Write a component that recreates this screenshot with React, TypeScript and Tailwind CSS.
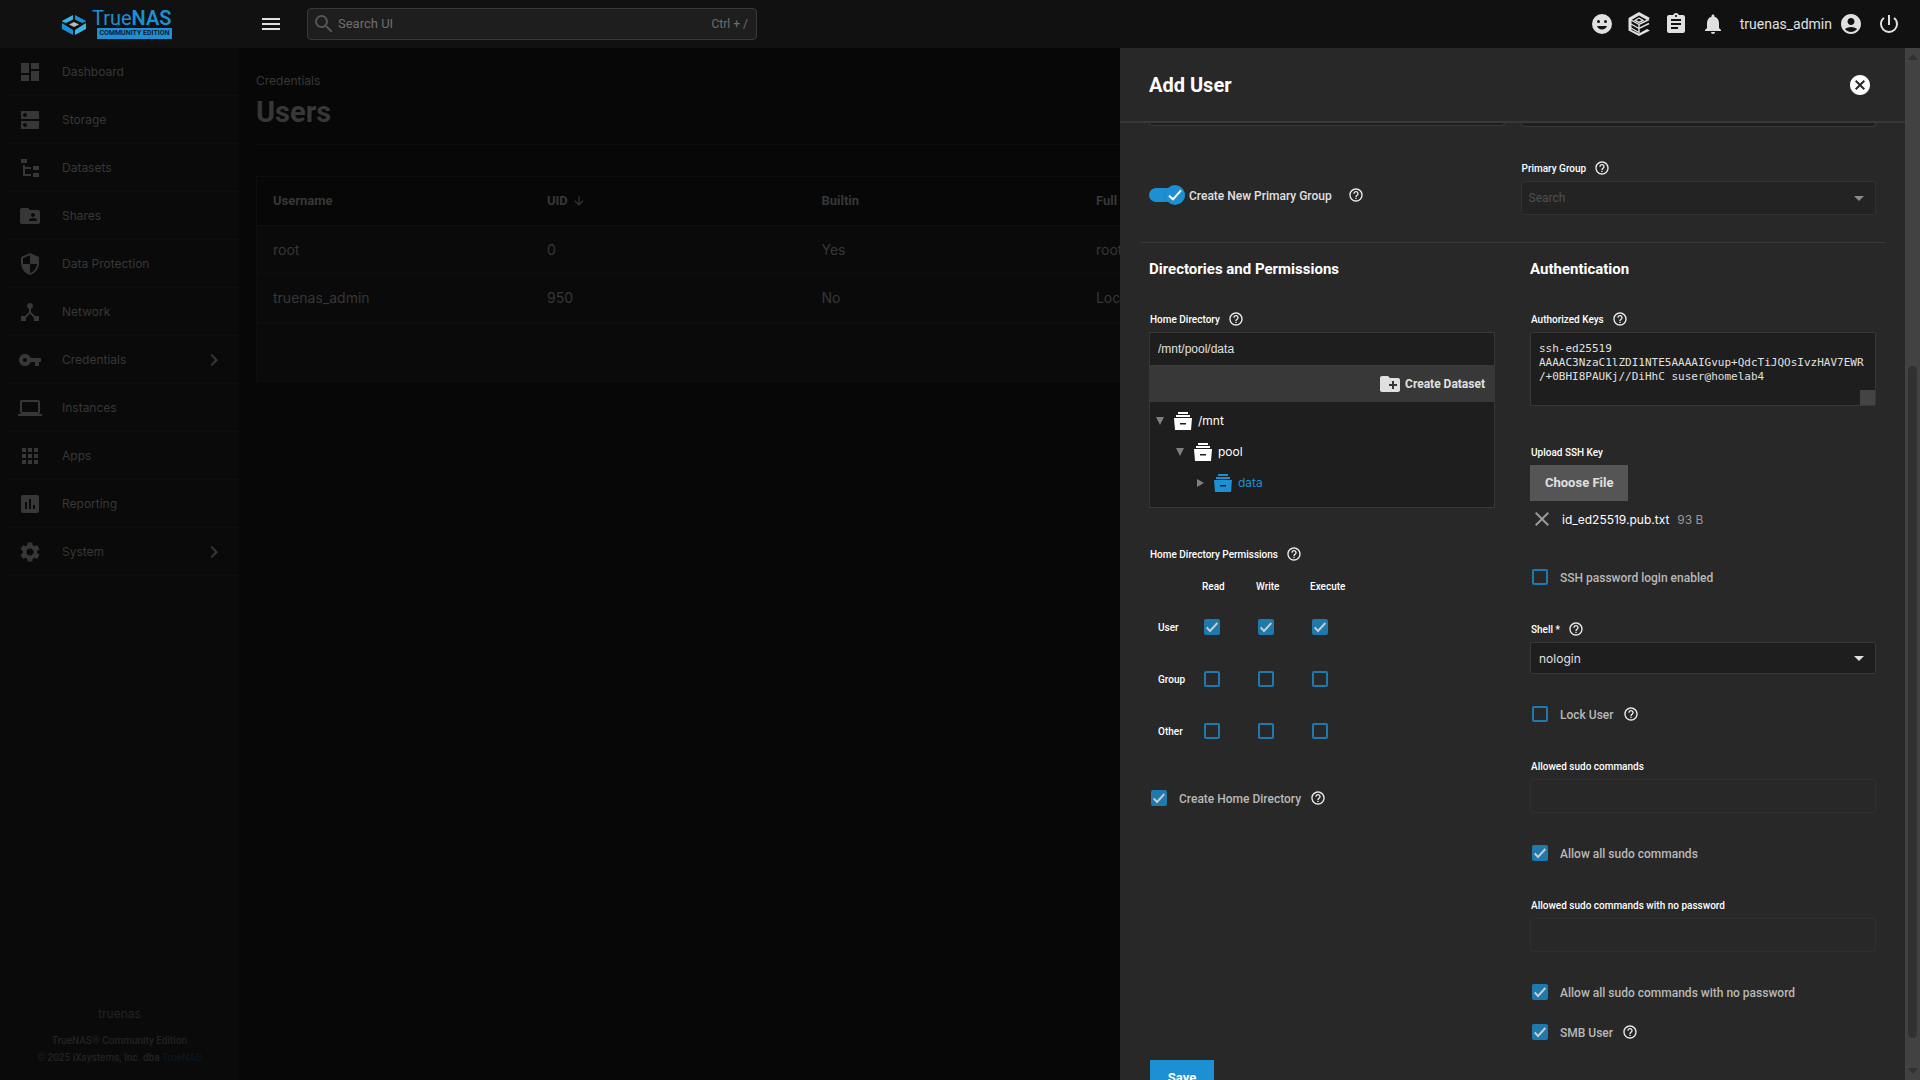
import type { ReactNode } from 'react';
import {
  MdAccountCircle,
  MdApps,
  MdArrowDownward,
  MdAssessment,
  MdAssignment,
  MdCancel,
  MdChevronRight,
  MdClose,
  MdCreateNewFolder,
  MdDashboard,
  MdDeviceHub,
  MdDns,
  MdFolderShared,
  MdHelpOutline,
  MdLaptop,
  MdMenu,
  MdNotifications,
  MdPowerSettingsNew,
  MdSearch,
  MdSecurity,
  MdSettings,
  MdVpnKey,
} from 'react-icons/md';

function DatasetsIcon() {
  return (
    <svg viewBox="0 0 24 24" className="size-6" fill="currentColor" aria-hidden="true">
      <path d="M3 3h6v4H3V3zm12 7h6v4h-6v-4zm0 7h6v4h-6v-4zm-2-4H7v5h6v2H5V9h2v2h6v2z" />
    </svg>
  );
}

function SmileIcon() {
  return (
    <svg viewBox="0 0 24 24" className="size-6" fill="currentColor" aria-hidden="true">
      <path
        fillRule="evenodd"
        d="M12 2a10 10 0 1 0 0 20 10 10 0 0 0 0-20zM8.500 8a1.500 1.500 0 1 1 0 3 1.500 1.500 0 0 1 0-3zm7 0a1.500 1.500 0 1 1 0 3 1.500 1.500 0 0 1 0-3zM7 14h10c-.8 2-2.600 3.500-5 3.500s-4.200-1.500-5-3.500z"
      />
    </svg>
  );
}

function TrueCommandIcon() {
  return (
    <svg viewBox="0 0 24 26" className="h-[26px] w-6" aria-hidden="true">
      <path fill="currentColor" d="M12 1 23 7l-3 2-8-4.500L4.500 9v10l7.500 3.500L20 18l3 1.500L12 25 1.500 19.500V7z" />
      <g fill="none" stroke="currentColor" strokeWidth="1.400">
        <path d="m4 9 8 4.500L22 8.500M4 13l8 4.500 10-5M4 17l8 4.500M12 13v9" />
        <path d="m8 9.500 4-2.500 4 2.500-4 2z" />
      </g>
    </svg>
  );
}

function BucketIcon() {
  return (
    <svg viewBox="0 0 18 18" className="size-[18px]" fill="currentColor" aria-hidden="true">
      <path fillRule="evenodd" d="M4 0h10v2H4zM2 3h14v2H2zM0 6h18l-1 12H1zM6 11v1.500h6V11z" />
    </svg>
  );
}

function Logo() {
  return (
    <a href="#" className="flex items-center gap-1.5" aria-label="TrueNAS Community Edition">
      <svg viewBox="0 0 24 20" className="mt-0.5 h-5 w-6" aria-hidden="true">
        <path fill="#3db5e6" d="M11 0v4.500L4 8 0 6.500V6z" />
        <path fill="#1c90d3" d="M13 0v4.500L20 8l4-1.500V6z" />
        <path fill="#1c90d3" d="M0 8v6l11 6v-5z" />
        <path fill="#3db5e6" d="M24 8v6l-11 6v-5z" />
        <path fill="#b9b9b9" d="m12 7 5 2.500-5 2.500-5-2.500z" />
      </svg>
      <span className="flex flex-col items-end pb-px font-['Roboto',sans-serif]">
        <span className="text-xl leading-5 text-[#1c90d3]">
          True<b className="font-semibold">NAS</b>
        </span>
        <span className="bg-[#1c90d3] px-0.5 text-[7px] leading-[11px] font-semibold text-[#11141a]">
          COMMUNITY EDITION
        </span>
      </span>
    </a>
  );
}

const nav: { label: string; icon: ReactNode; more?: boolean }[] = [
  { label: 'Dashboard', icon: <MdDashboard /> },
  { label: 'Storage', icon: <MdDns /> },
  { label: 'Datasets', icon: <DatasetsIcon /> },
  { label: 'Shares', icon: <MdFolderShared /> },
  { label: 'Data Protection', icon: <MdSecurity /> },
  { label: 'Network', icon: <MdDeviceHub /> },
  { label: 'Credentials', icon: <MdVpnKey />, more: true },
  { label: 'Instances', icon: <MdLaptop /> },
  { label: 'Apps', icon: <MdApps /> },
  { label: 'Reporting', icon: <MdAssessment /> },
  { label: 'System', icon: <MdSettings />, more: true },
];

function TopBar() {
  return (
    <header className="flex h-12 shrink-0 items-center bg-[#111111] text-[#e0e0e0]">
      <div className="flex w-60 items-center pl-[62px]">
        <Logo />
      </div>
      <button type="button" aria-label="Toggle menu" className="ml-[19px] text-2xl">
        <MdMenu />
      </button>
      <label className="ml-6 flex h-8 w-[450px] items-center rounded-sm border border-[#383838] bg-[#1e1e1e] pr-2 pl-1 font-['Roboto',sans-serif] text-xs text-[#6e6e6e]">
        <MdSearch className="mr-0.5 size-6 text-[#555555]" />
        <input aria-label="Search UI" placeholder="Search UI" className="min-w-0 flex-1 bg-transparent text-[13px] outline-none placeholder:text-[#6e6e6e]" />
        <span>Ctrl + /</span>
      </label>
      <div className="ml-auto flex items-center gap-[13px] pr-[19px] text-2xl">
        <button type="button" aria-label="Feedback"><SmileIcon /></button>
        <button type="button" aria-label="TrueCommand"><TrueCommandIcon /></button>
        <button type="button" aria-label="Jobs"><MdAssignment /></button>
        <button type="button" aria-label="Alerts"><MdNotifications /></button>
        <button type="button" className="mr-px ml-0.5 flex items-center gap-[7px]">
          <span className="font-['Roboto',sans-serif] text-sm">truenas_admin</span>
          <MdAccountCircle />
        </button>
        <button type="button" aria-label="Power"><MdPowerSettingsNew /></button>
      </div>
    </header>
  );
}

function Sidebar() {
  return (
    <nav className="flex w-60 shrink-0 flex-col border-r border-[#070707] bg-[#0a0a0a] pl-1 text-xs text-[#373737]">
      {nav.map((item) => (
        <a key={item.label} href="#" className="flex h-12 items-center border-b border-[#0e0e0e] pr-[13px] pl-3.5">
          <span className="text-2xl">{item.icon}</span>
          <span className="ml-5">{item.label}</span>
          {item.more && <MdChevronRight className="ml-auto size-6" />}
        </a>
      ))}
      <div className="mt-auto pr-1 pb-3.5 text-center font-['Roboto',sans-serif] text-[10px] leading-[17px] font-medium text-[#232323]">
        <div className="mb-2.5 font-['Inter',sans-serif] text-xs font-normal">truenas</div>
        <div>TrueNAS® Community Edition</div>
        <div>
          © 2025 iXsystems, Inc. dba <a href="#" className="text-[#071722]">TrueNAS</a>
        </div>
      </div>
    </nav>
  );
}

function UsersPage() {
  return (
    <main className="min-w-0 flex-1 bg-[#070707] px-4 pt-6 text-[#373737]">
      <div className="text-xs leading-[18px] font-normal">Credentials</div>
      <h1 className="border-b border-[#0e0e0e] pt-1 pb-3.5 font-['Roboto',sans-serif] text-[29px] leading-9 font-bold">Users</h1>
      <table className="mt-[31px] w-full table-fixed border border-[#0e0e0e] text-left text-sm">
        <thead className="font-['Roboto',sans-serif] text-[13px]">
          <tr className="h-[49px] border-b border-[#0e0e0e]">
            <th className="w-1/6 pl-4">Username</th>
            <th className="w-1/6 pl-4">
              <span className="flex items-center gap-1">UID <MdArrowDownward className="size-3.5" /></span>
            </th>
            <th className="w-1/6 pl-4">Builtin</th>
            <th className="pl-4">Full Name</th>
          </tr>
        </thead>
        <tbody className="bg-[#0a0a0a]">
          <tr className="h-12 border-b border-[#0e0e0e]">
            <td className="pl-4">root</td>
            <td className="pl-4">0</td>
            <td className="pl-4">Yes</td>
            <td className="pl-4">root</td>
          </tr>
          <tr className="h-[49px] border-b-2 border-[#0e0e0e]">
            <td className="pl-4">truenas_admin</td>
            <td className="pl-4">950</td>
            <td className="pl-4">No</td>
            <td className="pl-4">Local Administrator</td>
          </tr>
          <tr className="h-[59px]">
            <td colSpan={4} />
          </tr>
        </tbody>
      </table>
    </main>
  );
}

function Help() {
  return (
    <button type="button" aria-label="Help" className="text-base text-[#eeeeee]">
      <MdHelpOutline />
    </button>
  );
}

function FieldLabel({ id, text, help }: { id: string; text: string; help?: boolean }) {
  return (
    <div className="mb-[3px] flex h-5 items-center gap-2 pl-px">
      <label htmlFor={id} className="font-['Roboto',sans-serif] text-[10px] font-medium text-white">{text}</label>
      {help && <Help />}
    </div>
  );
}

function Box({ id, checked, label }: { id: string; checked?: boolean; label?: string }) {
  return (
    <span className="relative block size-4">
      <input
        id={id}
        type="checkbox"
        aria-label={label}
        defaultChecked={checked}
        className="peer block size-4 appearance-none rounded-xs border-2 border-[#1e79ad] checked:bg-[#1e79ad]"
      />
      <svg viewBox="0 0 24 24" className="pointer-events-none absolute inset-0 hidden size-4 peer-checked:block" fill="none" stroke="#cccccc" strokeWidth="2.800" aria-hidden="true">
        <path d="M4 12.500 9 18 20 6" />
      </svg>
    </span>
  );
}

function CheckRow({ id, text, checked, help }: { id: string; text: string; checked?: boolean; help?: boolean }) {
  return (
    <div className="flex h-5 items-center pl-0.5">
      <Box id={id} checked={checked} />
      <label htmlFor={id} className="mr-[9px] ml-3 pt-0.5 font-['Roboto',sans-serif] text-xs font-medium text-[#b8b8b8]">{text}</label>
      {help && <Help />}
    </div>
  );
}

function Caret({ className }: { className: string }) {
  return (
    <svg viewBox="0 0 10 5" className={className} fill="currentColor" aria-hidden="true">
      <path d="M0 0h10L5 5z" />
    </svg>
  );
}

function TreeRow({ name, className, closed }: { name: string; className: string; closed?: boolean }) {
  return (
    <li className={className}>
      <button type="button" className="flex h-[31px] items-center">
        <svg viewBox="0 0 8 8" className="size-2 text-[#808080]" fill="currentColor" aria-hidden="true">
          <path d={closed ? 'M1 0v8l7-4z' : 'M0 0h8L4 8z'} />
        </svg>
        <span className="mr-1.5 ml-2.5"><BucketIcon /></span>
        {name}
      </button>
    </li>
  );
}

function HomeDirectory() {
  return (
    <div className="border border-[#383838] bg-[#1e1e1e]">
      <input
        id="home"
        defaultValue="/mnt/pool/data"
        className="block h-8 w-full bg-transparent px-2 font-['Liberation_Sans',sans-serif] text-xs text-[#e0e0e0] outline-none"
      />
      <div className="flex h-[37px] items-center justify-end bg-[#383838] pr-[9px]">
        <button type="button" className="flex items-center gap-[3px] font-['Roboto',sans-serif] text-xs font-bold text-[#e0e0e0]">
          <MdCreateNewFolder className="size-6" />
          Create Dataset
        </button>
      </div>
      <ul className="pt-[3px] pb-[9px] text-xs text-white">
        <TreeRow name="/mnt" className="pl-1.5" />
        <TreeRow name="pool" className="pl-[26px]" />
        <TreeRow name="data" className="pl-[46px] text-[#1c90d3]" closed />
      </ul>
    </div>
  );
}

const permissionRows = [
  { name: 'User', set: true },
  { name: 'Group', set: false },
  { name: 'Other', set: false },
];
const permissionColumns = ['Read', 'Write', 'Execute'];

function Permissions() {
  return (
    <table className="text-left font-['Roboto',sans-serif] text-[10px] text-white">
      <thead>
        <tr className="h-[30px]">
          <th className="w-[53px]" />
          {permissionColumns.map((c) => (
            <th key={c} className="w-[54px] font-medium">{c}</th>
          ))}
        </tr>
      </thead>
      <tbody>
        {permissionRows.map((r) => (
          <tr key={r.name} className="h-[52px]">
            <th className="pl-[9px] font-medium">{r.name}</th>
            {permissionColumns.map((c) => (
              <td key={c} className="pl-0.5">
                <Box id={`${r.name}-${c}`} label={`${r.name} ${c}`} checked={r.set} />
              </td>
            ))}
          </tr>
        ))}
      </tbody>
    </table>
  );
}

function AddUserPanel() {
  return (
    <aside className="absolute top-12 right-0 bottom-0 flex w-[800px] max-w-full overflow-hidden bg-[#282828]">
      <form className="flex min-w-0 flex-1 flex-col">
        <div className="flex h-[75px] shrink-0 items-center justify-between border-b-2 border-[#383838] pr-[33px] pl-[29px]">
          <h2 className="font-['Roboto',sans-serif] text-xl font-bold text-white">Add User</h2>
          <button type="button" aria-label="Close" className="text-2xl text-white">
            <MdCancel />
          </button>
        </div>
        <div className="min-h-0 flex-1 overflow-hidden">
          <section className="mx-5 grid grid-cols-2 gap-4 border-b border-[#383838] px-[9px] pb-[27px]">
            <div>
              <div className="h-[3px] rounded-b-sm border border-t-0 border-[#383838] bg-[#1e1e1e]" />
              <div className="mt-[59px] flex h-5 items-center">
                <span className="relative flex h-5 w-9 items-center">
                  <input id="new-group" type="checkbox" role="switch" defaultChecked className="block h-3.5 w-9 appearance-none rounded-full bg-[#1c90d3]" />
                  <span className="pointer-events-none absolute right-0 flex size-5 items-center justify-center rounded-full bg-[#1c90d3] shadow">
                    <svg viewBox="0 0 24 24" className="size-4" fill="none" stroke="white" strokeWidth="3" aria-hidden="true">
                      <path d="M3 13 9 18.500 21 5" />
                    </svg>
                  </span>
                </span>
                <label htmlFor="new-group" className="mr-4 ml-1 pt-0.5 font-['Roboto',sans-serif] text-xs font-medium text-[#e0e0e0]">Create New Primary Group</label>
                <Help />
              </div>
            </div>
            <div>
              <div className="mb-[31px] h-1 rounded-b-sm border border-t-0 border-[#383838] bg-[#1e1e1e]" />
              <FieldLabel id="group" text="Primary Group" help />
              <div className="flex h-[34px] items-center rounded-xs border border-[#303030] bg-[#232323] pr-[11px] pl-[7px]">
                <input id="group" disabled placeholder="Search" className="min-w-0 flex-1 bg-transparent font-['Roboto',sans-serif] text-xs placeholder:text-[#505050]" />
                <Caret className="h-[5px] w-2.5 text-[#8a8a8a]" />
              </div>
            </div>
          </section>
          <section className="grid grid-cols-2 gap-[35px] px-[29px] pt-4">
            <div>
              <h3 className="mb-[30px] font-['Roboto',sans-serif] text-[15px] leading-5 font-bold text-white">Directories and Permissions</h3>
              <FieldLabel id="home" text="Home Directory" help />
              <HomeDirectory />
              <div className="mt-9 mb-[7px] flex h-5 items-center gap-2 pl-px">
                <span className="font-['Roboto',sans-serif] text-[10px] font-medium text-white">Home Directory Permissions</span>
                <Help />
              </div>
              <Permissions />
              <div className="mt-[31px]">
                <CheckRow id="create-home" text="Create Home Directory" checked help />
              </div>
            </div>
            <div>
              <h3 className="mb-[30px] font-['Roboto',sans-serif] text-[15px] leading-5 font-bold text-white">Authentication</h3>
              <FieldLabel id="keys" text="Authorized Keys" help />
              <div className="relative h-[74px]">
                <textarea
                  id="keys"
                  defaultValue={'ssh-ed25519\nAAAAC3NzaC1lZDI1NTE5AAAAIGvup+QdcTiJQOsIvzHAV7EWR\n/+0BHI8PAUKj//DiHhC suser@homelab4'}
                  className="block h-full w-full resize-none overflow-hidden rounded-xs border border-[#383838] bg-[#1e1e1e] px-2 pt-[9px] font-['DejaVu_Sans_Mono',monospace] text-[11px] leading-3.5 text-[#e0e0e0] outline-none"
                />
                <span className="absolute right-px bottom-px size-[15px] bg-[#444444]" />
              </div>
              <div className="mt-9">
                <FieldLabel id="upload" text="Upload SSH Key" />
              </div>
              <button id="upload" type="button" className="block h-9 bg-[#555555] px-[15px] font-['Roboto',sans-serif] text-[13px] font-bold text-[#e0e0e0]">Choose File</button>
              <div className="mt-2 mb-[38px] flex h-5 items-center text-xs">
                <button type="button" aria-label="Remove file" className="text-2xl text-[#999999]"><MdClose /></button>
                <span className="mr-2 ml-2 pt-0.5 text-white">id_ed25519.pub.txt</span>
                <span className="pt-0.5 text-[#999999]">93 B</span>
              </div>
              <CheckRow id="ssh-login" text="SSH password login enabled" />
              <div className="mt-8">
                <FieldLabel id="shell" text="Shell *" help />
              </div>
              <div className="relative mb-[30px]">
                <select id="shell" className="block h-8 w-full appearance-none rounded-xs border border-[#383838] bg-[#1e1e1e] px-2 pt-0.5 text-xs text-[#e0e0e0]">
                  <option>nologin</option>
                </select>
                <Caret className="pointer-events-none absolute top-3.5 right-3 h-[5px] w-2.5 text-[#e0e0e0]" />
              </div>
              <CheckRow id="lock" text="Lock User" help />
              <div className="mt-8 mb-[30px]">
                <FieldLabel id="sudo" text="Allowed sudo commands" />
                <input id="sudo" disabled className="block h-[34px] w-full rounded-xs border border-[#2f2f2f]" />
              </div>
              <CheckRow id="all-sudo" text="Allow all sudo commands" checked />
              <div className="mt-8 mb-[30px]">
                <FieldLabel id="sudo-np" text="Allowed sudo commands with no password" />
                <input id="sudo-np" disabled className="block h-[34px] w-full rounded-xs border border-[#2f2f2f]" />
              </div>
              <CheckRow id="all-sudo-np" text="Allow all sudo commands with no password" checked />
              <div className="mt-5">
                <CheckRow id="smb" text="SMB User" checked help />
              </div>
            </div>
          </section>
          <button type="button" className="mt-[18px] ml-[30px] block h-9 w-16 bg-[#1c90d3] font-['Roboto',sans-serif] text-[13px] font-bold text-white">Save</button>
        </div>
      </form>
      <div className="flex w-[15px] shrink-0 flex-col items-center bg-[#424242] py-1.5 text-[#313131]">
        <svg viewBox="0 0 10 6" className="h-1.5 w-2.5" fill="currentColor" aria-hidden="true"><path d="m5 0 5 6H0z" /></svg>
        <div className="min-h-0 flex-[306]" />
        <div className="w-[9px] flex-[672] rounded-full bg-[#313131]" />
        <div className="min-h-0 flex-[30]" />
        <svg viewBox="0 0 10 6" className="h-1.5 w-2.5" fill="currentColor" aria-hidden="true"><path d="M0 0h10L5 6z" /></svg>
      </div>
    </aside>
  );
}

export default function App() {
  return (
    <div className="relative flex h-screen flex-col overflow-hidden bg-[#070707] font-['Inter',sans-serif]">
      <TopBar />
      <div className="flex min-h-0 flex-1">
        <Sidebar />
        <UsersPage />
      </div>
      <AddUserPanel />
    </div>
  );
}
